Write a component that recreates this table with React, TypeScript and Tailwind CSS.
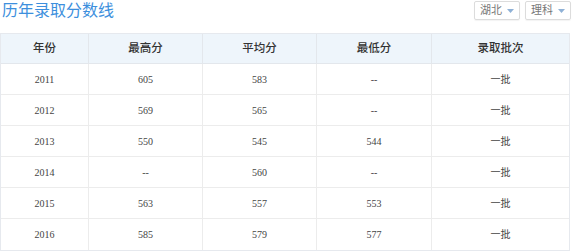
import React from "react";

const rows: string[][] = [
  ["2011", "605", "583", "--", "一批"],
  ["2012", "569", "565", "--", "一批"],
  ["2013", "550", "545", "544", "一批"],
  ["2014", "--", "560", "--", "一批"],
  ["2015", "563", "557", "553", "一批"],
  ["2016", "585", "579", "577", "一批"],
];

const headers = ["年份", "最高分", "平均分", "最低分", "录取批次"];

function Caret() {
  return (
    <svg width="7" height="4" viewBox="0 0 7 4" className="ml-[5px]">
      <path d="M0 0 L7 0 L3.5 4 Z" fill="#8fb1d6" />
    </svg>
  );
}

export default function App() {
  const font = { fontFamily: '"Liberation Serif", "Noto Sans CJK SC", serif' };
  return (
    <div className="w-[576px] h-[251px] bg-white overflow-hidden" style={font}>
      <div className="flex items-start justify-between w-[571px] h-[33px]">
        <div className="text-[16px] leading-[20px] text-[#3d8fdd] pl-[2px] pt-[1px]">历年录取分数线</div>
        <div className="flex gap-[5px] pt-[1px]">
          <div className="flex items-center h-[19px] px-[5px] border border-[#dcdcdc] rounded-[2px] text-[11px] text-[#777] shadow-[0_1px_1px_rgba(0,0,0,0.05)]">
            湖北<Caret />
          </div>
          <div className="flex items-center h-[19px] px-[5px] border border-[#dcdcdc] rounded-[2px] text-[11px] text-[#777] shadow-[0_1px_1px_rgba(0,0,0,0.05)]">
            理科<Caret />
          </div>
        </div>
      </div>
      <div className="w-[570px] border border-[#e6e9ee]">
        <div className="grid grid-cols-[88px_114px_114px_115px_1fr] h-[30px] bg-[#eef5fb] border-b border-[#e3e7ec]">
          {headers.map((h, i) => (
            <div
              key={h}
              className={`flex items-center justify-center text-[11.5px] font-medium text-[#333] ${i < 4 ? "border-r border-[#e3e7ec]" : ""}`}
            >
              {h}
            </div>
          ))}
        </div>
        {rows.map((r, ri) => (
          <div
            key={ri}
            className={`grid grid-cols-[88px_114px_114px_115px_1fr] h-[31px] ${ri < rows.length - 1 ? "border-b border-[#ececec]" : ""}`}
          >
            {r.map((c, i) => (
              <div
                key={i}
                className={`flex items-center justify-center text-[10px] text-[#444] ${i < 4 ? "border-r border-[#ececec]" : ""}`}
              >
                {c}
              </div>
            ))}
          </div>
        ))}
      </div>
    </div>
  );
}
